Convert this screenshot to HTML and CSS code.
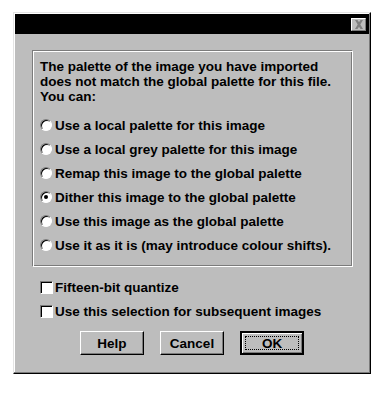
FILE: index.html
```html
<!DOCTYPE html>
<html lang="en">
<head>
  <meta charset="UTF-8">
  <title>Palette mismatch</title>
  <link rel="stylesheet" href="styles.css">
</head>
<body>
  <div class="dialog">
    <div class="titlebar">
      <button class="close" aria-label="Close">
        <svg width="10" height="9" viewBox="0 0 10 9">
          <path d="M1 0h2.5L5 2.2 6.5 0H9L6.3 4.5 9 9H6.5L5 6.8 3.5 9H1l2.7-4.5z" fill="#808080"/>
        </svg>
      </button>
    </div>

    <div class="body">
      <div class="group">
        <p class="message">The palette of the image you have imported does not match the global palette for this file. You can:</p>

        <label class="option"><span class="radio"></span>Use a local palette for this image</label>
        <label class="option"><span class="radio"></span>Use a local grey palette for this image</label>
        <label class="option"><span class="radio"></span>Remap this image to the global palette</label>
        <label class="option"><span class="radio checked"></span>Dither this image to the global palette</label>
        <label class="option"><span class="radio"></span>Use this image as the global palette</label>
        <label class="option"><span class="radio"></span>Use it as it is (may introduce colour shifts).</label>
      </div>

      <div class="checks">
        <label class="option"><span class="checkbox"></span>Fifteen-bit quantize</label>
        <label class="option"><span class="checkbox"></span>Use this selection for subsequent images</label>
      </div>

      <div class="buttons">
        <button class="btn">Help</button>
        <button class="btn">Cancel</button>
        <button class="btn default"><span class="focus">OK</span></button>
      </div>
    </div>
  </div>
</body>
</html>
```

FILE: styles.css
```css
body {
  margin: 0;
  background: #fff;
  font-family: "Liberation Sans", Arial, sans-serif;
  font-size: 13.5px;
  font-weight: bold;
  color: #000;
}
.dialog {
  margin: 12px 0 0 13px;
  width: 358px;
  height: 362px;
  box-sizing: border-box;
  background: #bdbdbd;
  border: 1px solid;
  border-color: #e4e4e4 #000 #000 #e4e4e4;
  box-shadow: inset -1px -1px 0 #7b7b7b, inset 1px 1px 0 #fff;
  padding: 1px;
}
.titlebar {
  height: 20px;
  background: #000;
  display: flex;
  justify-content: flex-end;
  align-items: center;
  padding-right: 3px;
}
.close {
  width: 15px;
  height: 13px;
  padding: 0;
  display: flex;
  align-items: center;
  justify-content: center;
  background: #bdbdbd;
  border: 1px solid;
  border-color: #fff #7b7b7b #7b7b7b #fff;
}
.body {
  padding: 16px 16px 0 17px;
}
.group {
  width: 321px;
  height: 217px;
  box-sizing: border-box;
  border: 1px solid;
  border-color: #7b7b7b #fff #fff #7b7b7b;
  box-shadow: inset 1px 1px 0 #fff, inset -1px -1px 0 #7b7b7b;
  padding: 8px 0 0 7px;
}
.message {
  margin: 0 0 9px 0;
  line-height: 15px;
  width: 300px;
}
.option {
  display: flex;
  align-items: center;
  height: 24px;
}
.radio {
  width: 12px;
  height: 12px;
  margin-right: 3px;
  border-radius: 50%;
  box-sizing: border-box;
  background: #fff;
  border: 1px solid;
  border-color: #7b7b7b #fff #fff #7b7b7b;
  box-shadow: inset 1px 1px 0 #000;
  position: relative;
}
.radio.checked::after {
  content: "";
  position: absolute;
  left: 3px;
  top: 3px;
  width: 4px;
  height: 4px;
  border-radius: 50%;
  background: #000;
}
.checks {
  padding: 8px 0 0 8px;
}
.checkbox {
  width: 13px;
  height: 13px;
  margin-right: 2px;
  box-sizing: border-box;
  background: #fff;
  border: 1px solid;
  border-color: #7b7b7b #fff #fff #7b7b7b;
  box-shadow: inset 1px 1px 0 #000;
}
.buttons {
  display: flex;
  gap: 16px;
  padding: 8px 0 0 48px;
}
.btn {
  width: 64px;
  height: 24px;
  padding: 0;
  font: inherit;
  background: #bdbdbd;
  border: 1px solid;
  border-color: #fff #000 #000 #fff;
  box-shadow: inset -1px -1px 0 #7b7b7b;
}
.btn.default {
  border: 2px solid #000;
  box-shadow: inset 1px 1px 0 #fff, inset -1px -1px 0 #7b7b7b;
  padding: 3px;
}
.btn .focus {
  display: block;
  height: 100%;
  box-sizing: border-box;
  border: 1px dotted #000;
  line-height: 14px;
}
```
